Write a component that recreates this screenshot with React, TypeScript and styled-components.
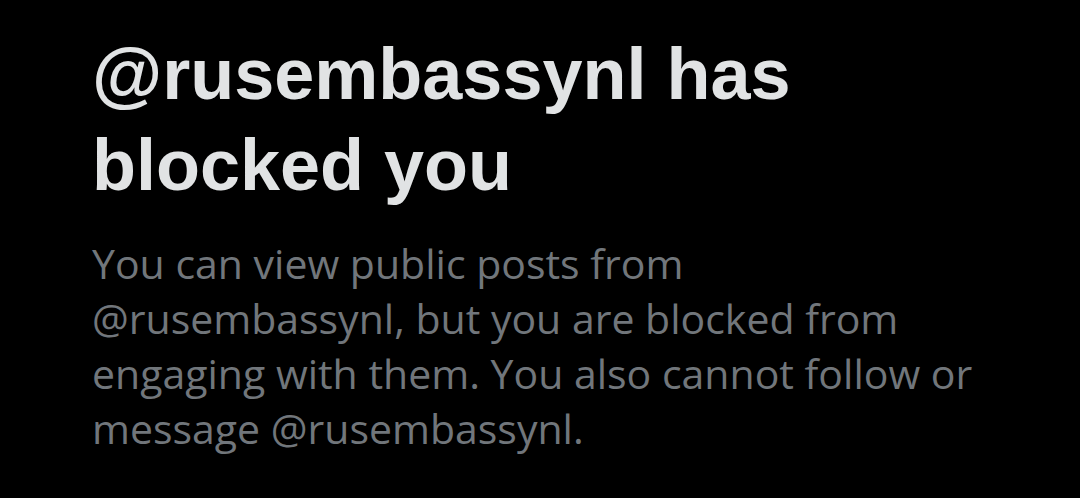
import styled, { createGlobalStyle } from 'styled-components'

const GlobalStyle = createGlobalStyle`
  html, body {
    margin: 0;
    padding: 0;
    background: #000000;
  }
`

const Page = styled.main`
  width: 1080px;
  height: 498px;
  box-sizing: border-box;
  padding: 29px 0 0 92px;
  background: #000000;
  overflow: hidden;
`

const Title = styled.h1`
  margin: 0;
  width: 760px;
  font-family: 'Liberation Sans', Arial, sans-serif;
  font-weight: 700;
  font-size: 72px;
  line-height: 91px;
  color: #e1e3e4;
`

const Body = styled.p`
  margin: 25px 0 0;
  width: 960px;
  font-family: 'Open Sans', Lato, sans-serif;
  font-weight: 400;
  font-size: 41px;
  line-height: 55px;
  color: #71767b;
`

export default function App() {
  return (
    <>
      <GlobalStyle />
      <Page>
        <Title>
          @rusembassynl has
          <br />
          blocked you
        </Title>
        <Body>
          You can view public posts from
          <br />
          @rusembassynl, but you are blocked from
          <br />
          engaging with them. You also cannot follow or
          <br />
          message @rusembassynl.
        </Body>
      </Page>
    </>
  )
}
